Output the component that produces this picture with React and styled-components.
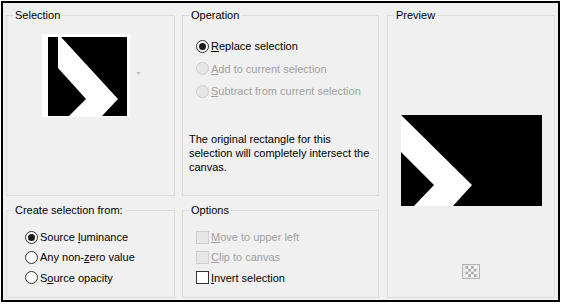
import React from 'react';
import styled, { createGlobalStyle } from 'styled-components';

const GlobalStyle = createGlobalStyle`
  html, body {
    margin: 0;
    padding: 0;
    background: #fff;
  }
  body {
    font-family: "Liberation Sans", Arial, sans-serif;
    font-size: 11px;
    color: #000;
  }
`;

const Frame = styled.div`
  box-sizing: border-box;
  margin: 1px 0 0 1px;
  width: 559px;
  height: 301px;
  border: 2px solid #000;
  background: #f0f0f0;
  padding: 5px 3px 2px 3px;
  display: grid;
  grid-template-columns: 169px 197px 169px;
  grid-template-rows: 188px 95px;
  column-gap: 7px;
  row-gap: 7px;
`;

const Group = styled.fieldset`
  margin: 0;
  padding: 0;
  min-width: 0;
  box-sizing: border-box;
  border: 1px solid #dcdcdc;
  grid-column: ${(p) => p.$col};
  grid-row: ${(p) => p.$row};
  margin-left: ${(p) => p.$shift || 0}px;
`;

const Legend = styled.legend`
  margin-left: 6px;
  padding: 0 2px;
  line-height: 14px;
  font-size: 11px;
`;

const Body = styled.div`
  display: flex;
  flex-direction: column;
  padding: ${(p) => p.$pad};
`;

const ThumbRow = styled.div`
  display: flex;
  align-items: center;
`;

const Thumb = styled.div`
  background: #fff;
  padding: 3px 3px 1px 6px;
  line-height: 0;
`;

const DropArrow = styled.svg`
  margin-left: 6px;
  margin-top: -4px;
`;

const Option = styled.div`
  display: flex;
  align-items: center;
  height: ${(p) => p.$h}px;
  color: ${(p) => (p.$disabled ? '#a0a0a0' : '#000')};
  white-space: nowrap;

  u {
    text-decoration-thickness: 1px;
    text-underline-offset: 1px;
  }
`;

const Radio = styled.span`
  box-sizing: border-box;
  width: 13px;
  height: 13px;
  margin-right: 2px;
  border-radius: 50%;
  border: 1px solid ${(p) => (p.$disabled ? '#cccccc' : '#333')};
  background: ${(p) => (p.$disabled ? '#e6e6e6' : '#fff')};
  display: flex;
  align-items: center;
  justify-content: center;
  flex: none;
`;

const Dot = styled.span`
  width: 7px;
  height: 7px;
  border-radius: 50%;
  background: #1a1a1a;
`;

const Check = styled.span`
  box-sizing: border-box;
  width: 13px;
  height: 13px;
  margin-right: 2px;
  border: 1px solid ${(p) => (p.$disabled ? '#cccccc' : '#333')};
  background: ${(p) => (p.$disabled ? '#e6e6e6' : '#fff')};
  flex: none;
`;

const Note = styled.p`
  margin: 30px 0 0 6px;
  line-height: 14px;
`;

const PreviewBody = styled.div`
  display: flex;
  flex-direction: column;
  align-items: center;
  padding-top: 93px;
`;

const TransparencyButton = styled.div`
  margin-top: 58px;
  width: 18px;
  height: 15px;
  box-sizing: border-box;
  border: 1px solid #b4b4b4;
  background: #e8e8e8;
  display: flex;
  align-items: center;
  justify-content: center;
`;

const RadioOption = ({ h, disabled, checked, children }) => (
  <Option $h={h} $disabled={disabled}>
    <Radio $disabled={disabled}>{checked && <Dot />}</Radio>
    <span>{children}</span>
  </Option>
);

const CheckOption = ({ h, disabled, children }) => (
  <Option $h={h} $disabled={disabled}>
    <Check $disabled={disabled} />
    <span>{children}</span>
  </Option>
);

const Checker = () => {
  const cells = [];
  for (let r = 0; r < 4; r++) {
    for (let c = 0; c < 4; c++) {
      if ((r + c) % 2 === 0) {
        cells.push(<rect key={`${r}-${c}`} x={c * 3} y={r * 3} width="3" height="3" fill="#a8a8a8" />);
      }
    }
  }
  return (
    <svg width="12" height="11" viewBox="0 0 12 12">
      <rect width="12" height="12" fill="#fff" />
      {cells}
    </svg>
  );
};

export default function App() {
  return (
    <>
      <GlobalStyle />
      <Frame>
        <Group $col={1} $row={1}>
          <Legend>Selection</Legend>
          <Body $pad="12px 0 0 35px">
            <ThumbRow>
              <Thumb>
                <svg width="79" height="79" viewBox="0 0 79 79">
                  <rect width="79" height="79" fill="#000" />
                  <polygon points="10,0 13,0 70,62 54,79 21,79 38,62 10,31" fill="#fff" />
                </svg>
              </Thumb>
              <DropArrow width="5" height="3" viewBox="0 0 5 3">
                <polygon points="0,0 5,0 2.5,3" fill="#c4c4c4" />
              </DropArrow>
            </ThumbRow>
          </Body>
        </Group>

        <Group $col={2} $row={1}>
          <Legend>Operation</Legend>
          <Body $pad="13px 0 0 13px">
            <RadioOption h={22} checked>
              <u>R</u>eplace selection
            </RadioOption>
            <RadioOption h={23} disabled>
              <u>A</u>dd to current selection
            </RadioOption>
            <RadioOption h={22} disabled>
              <u>S</u>ubtract from current selection
            </RadioOption>
          </Body>
          <Note>
            The original rectangle for this
            <br />
            selection will completely intersect the
            <br />
            canvas.
          </Note>
        </Group>

        <Group $col={3} $row="1 / span 2" $shift={1}>
          <Legend>Preview</Legend>
          <PreviewBody>
            <svg width="141" height="91" viewBox="0 0 141 91">
              <rect width="141" height="91" fill="#000" />
              <polygon points="0,0 71,70 52,91 13,91 33,70 0,37" fill="#fff" />
            </svg>
            <TransparencyButton>
              <Checker />
            </TransparencyButton>
          </PreviewBody>
        </Group>

        <Group $col={1} $row={2}>
          <Legend>Create selection from:</Legend>
          <Body $pad="10px 0 0 18px">
            <RadioOption h={20} checked>
              Source <u>l</u>uminance
            </RadioOption>
            <RadioOption h={20}>
              Any non-<u>z</u>ero value
            </RadioOption>
            <RadioOption h={21}>
              S<u>o</u>urce opacity
            </RadioOption>
          </Body>
        </Group>

        <Group $col={2} $row={2}>
          <Legend>Options</Legend>
          <Body $pad="10px 0 0 13px">
            <CheckOption h={20} disabled>
              <u>M</u>ove to upper left
            </CheckOption>
            <CheckOption h={20} disabled>
              <u>C</u>lip to canvas
            </CheckOption>
            <CheckOption h={21}>
              <u>I</u>nvert selection
            </CheckOption>
          </Body>
        </Group>
      </Frame>
    </>
  );
}
